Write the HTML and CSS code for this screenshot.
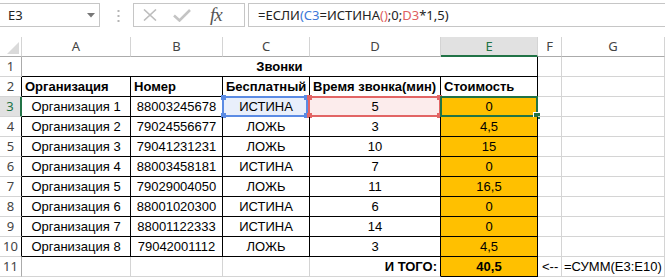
FILE: index.html
```html
<!DOCTYPE html>
<html lang="ru">
<head>
    <meta charset="UTF-8">
    <title>Звонки</title>
    <link rel="stylesheet" href="styles.css">
</head>
<body>
    <!-- Formula bar -->
    <div class="formula-bar">
        <div class="name-box">
            <span>E3</span>
            <svg class="drop" width="8" height="5" viewBox="0 0 8 5"><path d="M0 0H8L4 4.5Z" fill="#777"/></svg>
        </div>
        <svg class="dots" width="3" height="12" viewBox="0 0 3 12">
            <rect x="0.5" y="0" width="2" height="2" fill="#b5b5b5"/>
            <rect x="0.5" y="5" width="2" height="2" fill="#b5b5b5"/>
            <rect x="0.5" y="10" width="2" height="2" fill="#b5b5b5"/>
        </svg>
        <div class="fx-box">
            <svg width="14" height="12" viewBox="0 0 14 12"><path d="M1 0.5L13 11.5M13 0.5L1 11.5" stroke="#bdbdbd" stroke-width="1.6" fill="none"/></svg>
            <svg width="18" height="13" viewBox="0 0 18 13"><path d="M1 6.5L6.5 11.5L17 1" stroke="#c4c4c4" stroke-width="2.6" fill="none"/></svg>
            <span class="fx">fx</span>
        </div>
        <div class="formula">=ЕСЛИ<span class="blue">(C3</span>=ИСТИНА<span class="red">()</span>;0;<span class="red">D3</span>*1,5)</div>
    </div>

    <!-- Sheet -->
    <div class="sheet">
        <div class="corner"><svg width="12" height="12" viewBox="0 0 12 12"><path d="M12 0V12H0Z" fill="#dadada"/></svg></div>
        <div class="ch">A</div>
        <div class="ch">B</div>
        <div class="ch">C</div>
        <div class="ch">D</div>
        <div class="ch active">E</div>
        <div class="ch">F</div>
        <div class="ch">G</div>

        <div class="rh">1</div>
        <div class="cell title">Звонки</div>
        <div class="cell"></div>
        <div class="cell"></div>

        <div class="rh dark">2</div>
        <div class="cell b bold">Организация</div>
        <div class="cell b bold">Номер</div>
        <div class="cell b bold">Бесплатный</div>
        <div class="cell b bold">Время звонка(мин)</div>
        <div class="cell b bold">Стоимость</div>
        <div class="cell"></div>
        <div class="cell"></div>

        <div class="rh dark active">3</div>
        <div class="cell b mid">Организация 1</div>
        <div class="cell b mid">88003245678</div>
        <div class="cell b mid ref-blue">ИСТИНА
            <span class="frame blue-frame"><i class="tl"></i><i class="tr"></i><i class="bl"></i><i class="br"></i></span>
        </div>
        <div class="cell b mid ref-red">5
            <span class="frame red-frame"><i class="tl"></i><i class="tr"></i><i class="bl"></i><i class="br"></i></span>
        </div>
        <div class="cell b mid cost">0
            <span class="selected"><i class="handle"></i></span>
        </div>
        <div class="cell"></div>
        <div class="cell"></div>

        <div class="rh dark">4</div>
        <div class="cell b mid">Организация 2</div>
        <div class="cell b mid">79024556677</div>
        <div class="cell b mid">ЛОЖЬ</div>
        <div class="cell b mid">3</div>
        <div class="cell b mid cost">4,5</div>
        <div class="cell"></div>
        <div class="cell"></div>

        <div class="rh dark">5</div>
        <div class="cell b mid">Организация 3</div>
        <div class="cell b mid">79041231231</div>
        <div class="cell b mid">ЛОЖЬ</div>
        <div class="cell b mid">10</div>
        <div class="cell b mid cost">15</div>
        <div class="cell"></div>
        <div class="cell"></div>

        <div class="rh dark">6</div>
        <div class="cell b mid">Организация 4</div>
        <div class="cell b mid">88003458181</div>
        <div class="cell b mid">ИСТИНА</div>
        <div class="cell b mid">7</div>
        <div class="cell b mid cost">0</div>
        <div class="cell"></div>
        <div class="cell"></div>

        <div class="rh dark">7</div>
        <div class="cell b mid">Организация 5</div>
        <div class="cell b mid">79029004050</div>
        <div class="cell b mid">ЛОЖЬ</div>
        <div class="cell b mid">11</div>
        <div class="cell b mid cost">16,5</div>
        <div class="cell"></div>
        <div class="cell"></div>

        <div class="rh dark">8</div>
        <div class="cell b mid">Организация 6</div>
        <div class="cell b mid">88001020300</div>
        <div class="cell b mid">ИСТИНА</div>
        <div class="cell b mid">6</div>
        <div class="cell b mid cost">0</div>
        <div class="cell"></div>
        <div class="cell"></div>

        <div class="rh dark">9</div>
        <div class="cell b mid">Организация 7</div>
        <div class="cell b mid">88001122333</div>
        <div class="cell b mid">ИСТИНА</div>
        <div class="cell b mid">14</div>
        <div class="cell b mid cost">0</div>
        <div class="cell"></div>
        <div class="cell"></div>

        <div class="rh dark">10</div>
        <div class="cell b mid">Организация 8</div>
        <div class="cell b mid">79042001112</div>
        <div class="cell b mid">ЛОЖЬ</div>
        <div class="cell b mid">3</div>
        <div class="cell b mid cost">4,5</div>
        <div class="cell"></div>
        <div class="cell"></div>

        <div class="rh">11</div>
        <div class="cell"></div>
        <div class="cell"></div>
        <div class="cell"></div>
        <div class="cell right bold dark-r">И ТОГО:</div>
        <div class="cell b mid bold cost">40,5</div>
        <div class="cell arrow">&lt;--</div>
        <div class="cell sum">=СУММ(E3:E10)</div>
    </div>
</body>
</html>
```

FILE: styles.css
```css
/* Base */
body {
    margin: 0;
    background: #fff;
    font-family: 'Liberation Sans', Arial, sans-serif;
    color: #000;
    overflow: hidden;
}

/* Formula bar */
.formula-bar {
    display: flex;
    align-items: flex-start;
    height: 37px;
    padding-top: 3px;
    box-sizing: border-box;
    font-family: 'Noto Sans', sans-serif;
}

.name-box {
    width: 100px;
    height: 24px;
    box-sizing: border-box;
    border: 1px solid #c6c6c6;
    border-left: none;
    display: flex;
    align-items: center;
    justify-content: space-between;
    padding: 0 4px 0 8px;
    font-size: 13px;
    color: #222;
}

.drop {
    margin-top: 1px;
}

.dots {
    margin: 7px 13px 0 17px;
}

.fx-box {
    width: 112px;
    height: 24px;
    box-sizing: border-box;
    border: 1px solid #c6c6c6;
    display: flex;
    align-items: center;
    padding-left: 9px;
    gap: 16px;
}

.fx {
    font-family: 'Liberation Serif', serif;
    font-style: italic;
    font-size: 19px;
    color: #555;
    margin-left: 3px;
    letter-spacing: -1px;
}

.formula {
    flex: 1;
    margin-left: 3px;
    height: 24px;
    box-sizing: border-box;
    border: 1px solid #c6c6c6;
    border-right: none;
    padding-left: 9px;
    font-size: 13px;
    line-height: 22px;
    color: #222;
}

.formula .blue {
    color: #3c78d8;
}

.formula .red {
    color: #e06060;
}

/* Sheet grid */
.sheet {
    display: grid;
    grid-template-columns: 22px 109px 92px 87px 131px 97px 24px 103px;
    grid-auto-rows: 20px;
    font-size: 13px;
}

.sheet > div {
    box-sizing: border-box;
    border-right: 1px solid #d4d4d4;
    border-bottom: 1px solid #d4d4d4;
}

.corner {
    display: flex;
    align-items: flex-end;
    justify-content: flex-end;
    padding: 0 2px 2px 0;
    border-bottom-color: #ababab !important;
}

.ch {
    font-family: 'Noto Sans', sans-serif;
    font-size: 13px;
    color: #444;
    text-align: center;
    line-height: 19px;
    border-bottom-color: #ababab !important;
}

.ch.active {
    background: #e1e1e1;
    color: #217346;
    border-bottom: 2px solid #217346 !important;
}

.rh {
    font-family: 'Noto Sans', sans-serif;
    font-size: 13px;
    color: #444;
    text-align: center;
    line-height: 19px;
    border-right-color: #ababab !important;
}

.rh.dark {
    border-right-color: #000 !important;
}

.rh.active {
    color: #217346;
    background: #e1e1e1;
    border-right: 2px solid #217346 !important;
}

.cell {
    position: relative;
    padding: 0 3px;
    line-height: 19px;
    white-space: nowrap;
}

.cell.b {
    border-right-color: #000;
    border-bottom-color: #000;
}

.title {
    grid-column: 2 / 7;
    text-align: center;
    font-weight: bold;
    border-right-color: #000 !important;
    border-bottom-color: #000 !important;
}

.bold {
    font-weight: bold;
}

.mid {
    text-align: center;
}

.right {
    text-align: right;
}

.dark-r {
    border-right-color: #000 !important;
}

.cost {
    background: #ffc000;
}

.arrow {
    padding-left: 4px;
}

.sum {
    padding-left: 2px;
}

/* Formula references */
.ref-blue {
    background: #e9effb;
}

.ref-red {
    background: #fcecec;
}

.frame {
    position: absolute;
    top: -1px;
    left: -1px;
    right: -1px;
    bottom: -1px;
    border: 2px solid;
}

.blue-frame {
    border-color: #5b8be4;
    right: 1px;
}

.red-frame {
    border-color: #e26565;
    left: -2px;
}

.frame i {
    position: absolute;
    width: 5px;
    height: 5px;
}

.blue-frame i {
    background: #5b8be4;
}

.red-frame i {
    background: #e26565;
}

.frame .tl { top: -3px; left: -3px; }
.frame .tr { top: -3px; right: -3px; }
.frame .bl { bottom: -3px; left: -3px; }
.frame .br { bottom: -3px; right: -3px; }

/* Selected cell */
.selected {
    position: absolute;
    top: -1px;
    left: -1px;
    right: -1px;
    bottom: -1px;
    border: 2px solid #217346;
}

.handle {
    position: absolute;
    right: -5px;
    bottom: -5px;
    width: 6px;
    height: 6px;
    background: #217346;
    border: 1px solid #fff;
}
```
